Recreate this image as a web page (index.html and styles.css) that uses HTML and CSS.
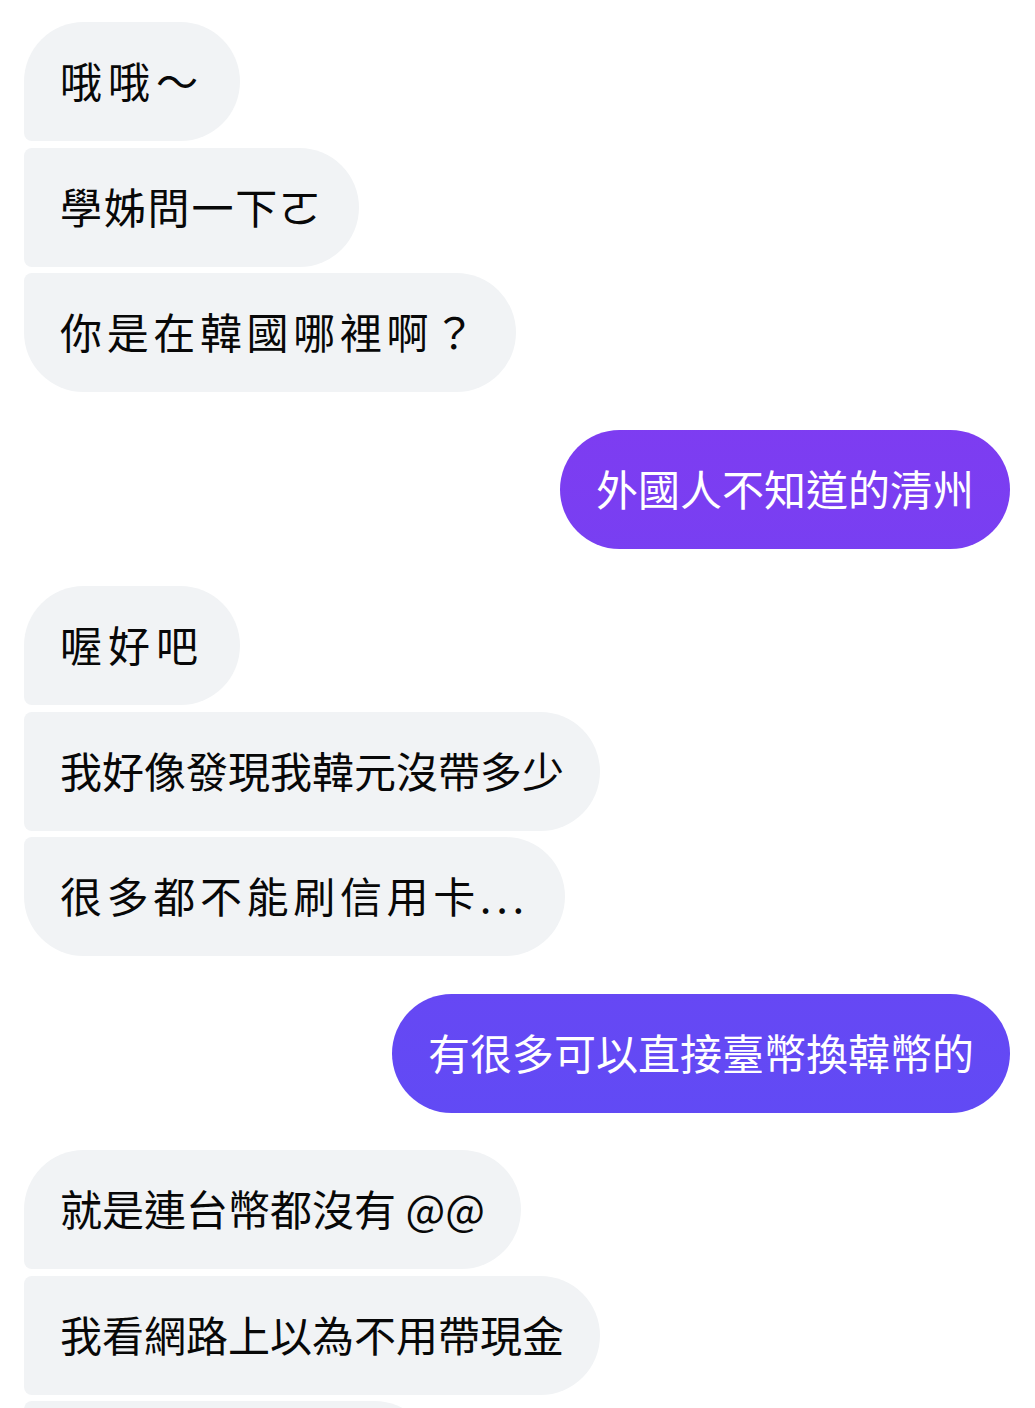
FILE: index.html
```html
<!DOCTYPE html>
<html lang="zh-Hant">
<head>
<meta charset="utf-8">
<title>Chat</title>
<link rel="stylesheet" href="styles.css">
</head>
<body>
<main class="thread">
  <section class="group in">
    <div class="bubble spaced-l">哦哦～</div>
    <div class="bubble spaced-s">學姊問一下ㄛ</div>
    <div class="bubble spaced-m">你是在韓國哪裡啊？</div>
  </section>
  <section class="group out">
    <div class="bubble">外國人不知道的清州</div>
  </section>
  <section class="group in">
    <div class="bubble spaced-l">喔好吧</div>
    <div class="bubble">我好像發現我韓元沒帶多少</div>
    <div class="bubble spaced-m">很多都不能刷信用卡...</div>
  </section>
  <section class="group out">
    <div class="bubble">有很多可以直接臺幣換韓幣的</div>
  </section>
  <section class="group in">
    <div class="bubble">就是連台幣都沒有 @@</div>
    <div class="bubble">我看網路上以為不用帶現金</div>
    <div class="bubble partial" aria-hidden="true"></div>
  </section>
</main>
</body>
</html>
```

FILE: styles.css
```css
html, body {
  margin: 0;
  padding: 0;
  background: #ffffff;
  height: 1408px;
  overflow: hidden;
}

.thread {
  display: flex;
  flex-direction: column;
  gap: 37.5px;
  padding: 22px 25px 0 24px;
  font-family: "Noto Sans CJK TC", "Noto Sans", sans-serif;
  font-size: 42px;
}

.group {
  display: flex;
  flex-direction: column;
  gap: 6.5px;
}

.group.in { align-items: flex-start; }
.group.out { align-items: flex-end; }

.bubble {
  box-sizing: border-box;
  height: 119px;
  line-height: 59px;
  padding: 28px 36px 32px;
  white-space: nowrap;
  border-radius: 60px;
}

.spaced-s { letter-spacing: 1.8px; }
.spaced-m { letter-spacing: 4.65px; }
.spaced-l { letter-spacing: 6px; }

.in .bubble {
  background: #f1f3f5;
  color: #080808;
  border-radius: 8px 60px 60px 8px;
}
.in .bubble:first-child { border-top-left-radius: 60px; }
.in .bubble:last-child { border-bottom-left-radius: 60px; }

.out .bubble {
  color: #ffffff;
  background: linear-gradient(180deg, #8f34ef 0px, #5550f6 1408px);
  background-attachment: fixed;
}

.bubble.partial {
  width: 410px;
}
```
